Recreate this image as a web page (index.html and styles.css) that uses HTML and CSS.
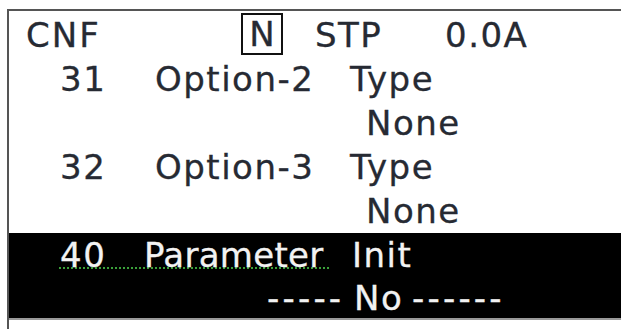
FILE: index.html
```html
<!DOCTYPE html>
<html lang="en">
<head>
<meta charset="UTF-8">
<meta name="viewport" content="width=device-width, initial-scale=1.0">
<title>CNF Option Menu</title>
<link rel="stylesheet" href="styles.css">
</head>
<body>
<div class="screen">
    <div class="row head">
        <span class="mode">CNF</span>
        <span class="nbox">N</span>
        <span class="state">STP</span>
        <span class="amps">0.0A</span>
    </div>

    <div class="row">
        <span class="num">31</span>
        <span class="name">Option-2</span>
        <span>Type</span>
    </div>
    <div class="row value">None</div>

    <div class="row">
        <span class="num">32</span>
        <span class="name">Option-3</span>
        <span>Type</span>
    </div>
    <div class="row value">None</div>

    <div class="selected">
        <div class="row">
            <span class="squiggle"><span class="sel-num">40</span><span class="param">Parameter</span></span>
            <span class="init">Init</span>
        </div>
        <div class="row choice">
            <span class="dashes left">-----</span>
            <span class="pick">No</span>
            <span class="dashes">------</span>
        </div>
    </div>
</div>
</body>
</html>
```

FILE: styles.css
```css
html, body {
    margin: 0;
    padding: 0;
    background-color: #fff;
    overflow: hidden;
}

body {
    width: 621px;
    height: 329px;
}

.screen {
    margin: 9px 0 0 7px;
    height: 320px;
    border-left: 2px solid #555;
    border-top: 2px solid #555;
    font-family: "DejaVu Sans", Verdana, sans-serif;
    font-size: 34px;
    letter-spacing: 1.5px;
    color: #262a33;
    -webkit-text-stroke: 0.3px currentColor;
}

.row {
    display: flex;
    height: 44px;
    line-height: 44px;
    padding-left: 51px;
    white-space: pre;
}

.head {
    height: 46px;
    padding-left: 17px;
    align-items: flex-start;
    padding-top: 2px;
    box-sizing: border-box;
}

.mode {
    width: 215px;
    letter-spacing: 2px;
}

.nbox {
    width: 42px;
    height: 42px;
    box-sizing: border-box;
    border: 2px solid #111;
    line-height: 38px;
    text-align: center;
    letter-spacing: 0;
}

.state {
    margin-left: 32px;
    width: 130px;
}

.num {
    width: 95px;
}

.name {
    width: 195px;
}

.value {
    padding-left: 357px;
}

.selected {
    background-color: #000;
    color: #f2f2f2;
    height: 85px;
    border-bottom: 2px solid #9a9a9a;
}

.selected .row {
    height: 42.5px;
    line-height: 44px;
}

.squiggle {
    display: flex;
    width: 270px;
    margin-left: -2px;
    padding-left: 2px;
    background-image: radial-gradient(circle, #3aa03a 1.1px, transparent 1.5px);
    background-size: 4px 4px;
    background-repeat: repeat-x;
    background-position: 0 33px;
}

.sel-num {
    width: 84px;
}

.param {
    letter-spacing: 0.3px;
}

.init {
    margin-left: 22px;
}

.choice {
    padding-left: 258px;
}

.dashes {
    letter-spacing: 3.2px;
}

.dashes.left {
    width: 87px;
}

.pick {
    width: 58px;
}
```
